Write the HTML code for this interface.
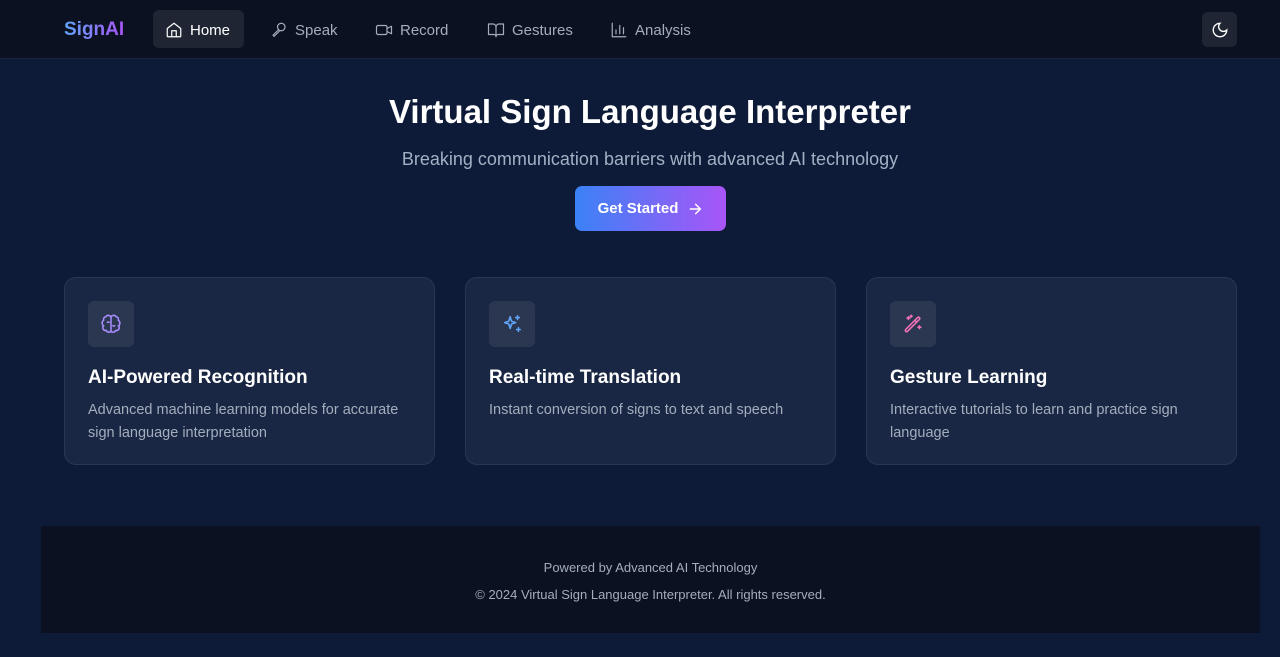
<!DOCTYPE html>
<html><head><meta charset="utf-8"><style>
*{box-sizing:border-box;margin:0;padding:0}
body{width:1280px;height:657px;background:#0d1b38;font-family:"Liberation Sans",sans-serif;color:#fff;overflow:hidden;position:relative}
nav{height:59px;background:#0b1120;border-bottom:1px solid #1a2540;position:relative}
.logo{position:absolute;left:64px;top:19px;font-size:19px;font-weight:bold;background:linear-gradient(90deg,#60a5fa,#a855f7);-webkit-background-clip:text;color:transparent}
.item{position:absolute;top:10px;height:38px;display:flex;align-items:center;gap:7px;font-size:15px;color:#a3adbd;padding:2px 12px 0}
.item svg{width:18px;height:18px;fill:none;stroke:currentColor;stroke-width:1.6;stroke-linecap:round;stroke-linejoin:round}
.active{background:#1f2533;color:#fff;border-radius:6px}
.moon{position:absolute;right:43px;top:12px;width:35px;height:35px;background:#1f2533;border-radius:6px;display:flex;align-items:center;justify-content:center}
h1{position:absolute;top:93px;left:0;width:1300px;text-align:center;font-size:33px;font-weight:bold}
.sub{position:absolute;top:149px;left:0;width:1300px;text-align:center;font-size:18px;color:#a3b0c4}
.btn{position:absolute;left:575px;top:186px;width:151px;height:45px;border-radius:7px;background:linear-gradient(90deg,#3b82f6,#a855f7);display:flex;align-items:center;justify-content:center;gap:9px;font-size:15px;font-weight:bold}
.card{position:absolute;top:277px;width:371px;height:188px;background:#1a2744;border:1px solid #2a3752;border-radius:12px;padding:23px}
.ic{width:46px;height:46px;background:#2b3750;border-radius:6px;display:flex;align-items:center;justify-content:center}
.ic svg{width:22px;height:22px;fill:none;stroke-width:1.7;stroke-linecap:round;stroke-linejoin:round}
.card h3{margin-top:20px;font-size:19px;font-weight:bold}
.card p{margin-top:10px;font-size:14.5px;line-height:23px;color:#a3adbd}
footer{position:absolute;left:41px;top:526px;width:1219px;height:107px;background:#0b1120;text-align:center;color:#a3adbd;font-size:13px}
</style></head><body>
<nav>
<div class="logo">SignAI</div>
<div class="item active" style="left:153px;width:91px"><svg viewBox="0 0 24 24"><path d="M3 10l9-7 9 7v10a1 1 0 0 1-1 1H4a1 1 0 0 1-1-1z"/><path d="M9 21v-8h6v8"/></svg>Home</div>
<div class="item" style="left:258px"><svg viewBox="0 0 24 24"><circle cx="15" cy="8" r="5"/><path d="M11.5 11.5L4 19l1.5 1.5L13 13"/></svg>Speak</div>
<div class="item" style="left:363px"><svg viewBox="0 0 24 24"><rect x="2" y="6" width="14" height="12" rx="2"/><path d="M16 10l6-3v10l-6-3"/></svg>Record</div>
<div class="item" style="left:475px"><svg viewBox="0 0 24 24"><path d="M2 4h6a4 4 0 0 1 4 4v13a3 3 0 0 0-3-3H2zM22 4h-6a4 4 0 0 0-4 4v13a3 3 0 0 1 3-3h7z"/></svg>Gestures</div>
<div class="item" style="left:598px"><svg viewBox="0 0 24 24"><path d="M3 3v18h18M8 17v-5M13 17V6M18 17v-8"/></svg>Analysis</div>
<div class="moon"><svg viewBox="0 0 24 24" width="18" height="18" fill="none" stroke="#fff" stroke-width="1.8"><path d="M12 3a6 6 0 0 0 9 9 9 9 0 1 1-9-9z"/></svg></div>
</nav>
<h1>Virtual Sign Language Interpreter</h1>
<div class="sub">Breaking communication barriers with advanced AI technology</div>
<div class="btn">Get Started <svg width="16" height="16" viewBox="0 0 24 24" fill="none" stroke="#fff" stroke-width="2.2" stroke-linecap="round"><path d="M5 12h14M13 5l7 7-7 7"/></svg></div>
<div class="card" style="left:64px"><div class="ic"><svg viewBox="0 0 24 24" stroke="#a78bfa"><path d="M12 5a3 3 0 0 0-5.5-1A3 3 0 0 0 4 8a3.5 3.5 0 0 0 0 6 3 3 0 0 0 3 5 3 3 0 0 0 5 1zM12 5a3 3 0 0 1 5.5-1A3 3 0 0 1 20 8a3.5 3.5 0 0 1 0 6 3 3 0 0 1-3 5 3 3 0 0 1-5 1zM12 5v15M8 10h2M14 14h2"/></svg></div><h3>AI-Powered Recognition</h3><p>Advanced machine learning models for accurate sign language interpretation</p></div>
<div class="card" style="left:465px"><div class="ic"><svg viewBox="0 0 24 24" stroke="#60a5fa"><path d="M10 4l1.5 5L16 10.5 11.5 12 10 17 8.5 12 4 10.5 8.5 9zM18 3v4M16 5h4M19 16v4M17 18h4"/></svg></div><h3>Real-time Translation</h3><p>Instant conversion of signs to text and speech</p></div>
<div class="card" style="left:866px"><div class="ic"><svg viewBox="0 0 24 24" stroke="#f472b6"><path d="M4 18L17 5a1.4 1.4 0 0 1 2 2L6 20a1.4 1.4 0 0 1-2-2zM14 8l2 2M7 4v3M5.5 5.5h3M10 2.5v2M9 3.5h2M19 14v3M17.5 15.5h3"/></svg></div><h3>Gesture Learning</h3><p>Interactive tutorials to learn and practice sign language</p></div>
<footer><div style="margin-top:34px">Powered by Advanced AI Technology</div><div style="margin-top:12px">© 2024 Virtual Sign Language Interpreter. All rights reserved.</div></footer>
</body></html>
